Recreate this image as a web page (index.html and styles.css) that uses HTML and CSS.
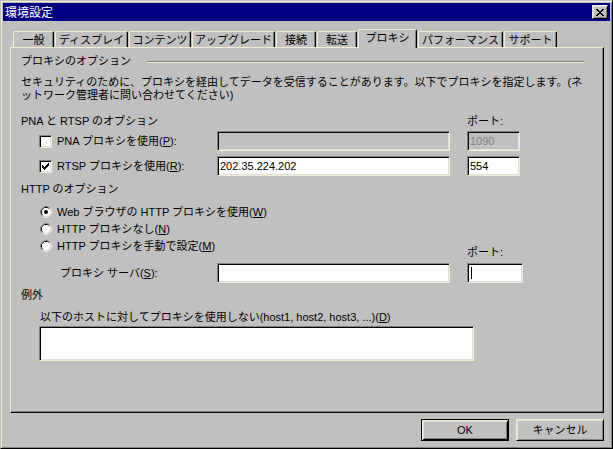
FILE: index.html
```html
<!DOCTYPE html>
<html lang="ja">
<head>
<meta charset="utf-8">
<title>環境設定</title>
<link rel="stylesheet" href="styles.css">
</head>
<body>
<div class="window">
  <div class="titlebar">
    <span class="title">環境設定</span>
    <span class="close-btn"><svg width="8" height="7" viewBox="0 0 8 7" shape-rendering="crispEdges"><path fill="#000" d="M0 0h2v1h-2z M6 0h2v1h-2z M1 1h2v1h-2z M5 1h2v1h-2z M2 2h4v1h-4z M3 3h2v1h-2z M2 4h4v1h-4z M1 5h2v1h-2z M5 5h2v1h-2z M0 6h2v1h-2z M6 6h2v1h-2z"/></svg></span>
  </div>

  <div class="tabs">
    <div class="tab tab-general">一般</div>
    <div class="tab tab-display">ディスプレイ</div>
    <div class="tab tab-contents">コンテンツ</div>
    <div class="tab tab-upgrade">アップグレード</div>
    <div class="tab tab-connect">接続</div>
    <div class="tab tab-transfer">転送</div>
    <div class="tab tab-proxy active">プロキシ</div>
    <div class="tab tab-perf">パフォーマンス</div>
    <div class="tab tab-support">サポート</div>
  </div>

  <div class="panel">
    <div class="group-title"><span>プロキシのオプション</span><span class="etch"></span></div>
    <p class="desc">セキュリティのために、プロキシを経由してデータを受信することがあります。以下でプロキシを指定します。(ネ<br>ットワーク管理者に問い合わせてください)</p>

    <div class="row head-row pna-head">
      <span class="main-col">PNA と RTSP のオプション</span>
      <span>ポート:</span>
    </div>
    <div class="row field-row first-field">
      <div class="check-col">
        <span class="checkbox"></span>
        <span>PNA プロキシを使用(<u>P</u>):</span>
      </div>
      <span class="field disabled"></span>
      <span class="field port disabled">1090</span>
    </div>
    <div class="row field-row second-field">
      <div class="check-col">
        <span class="checkbox"><svg width="7" height="7" viewBox="0 0 7 7" shape-rendering="crispEdges"><path fill="#000" d="M6 0h1v1h-1z M5 1h2v1h-2z M0 2h1v1h-1z M4 2h3v1h-3z M0 3h2v1h-2z M3 3h3v1h-3z M0 4h5v1h-5z M1 5h3v1h-3z M2 6h1v1h-1z"/></svg></span>
        <span>RTSP プロキシを使用(<u>R</u>):</span>
      </div>
      <span class="field">202.35.224.202</span>
      <span class="field port">554</span>
    </div>

    <div class="row head-row http-head">HTTP のオプション</div>
    <div class="radios">
      <div class="radio-row">
        <svg class="radio" width="12" height="12" viewBox="0 0 12 12"><path d="M2.11 9.89 A5.5 5.5 0 0 1 9.89 2.11" stroke="#808080" fill="none"/><path d="M9.89 2.11 A5.5 5.5 0 0 1 2.11 9.89" stroke="#efedd3" fill="none"/><path d="M2.82 9.18 A4.5 4.5 0 0 1 9.18 2.82" stroke="#000" fill="none"/><path d="M9.18 2.82 A4.5 4.5 0 0 1 2.82 9.18" stroke="#dfdfdf" fill="none"/><circle cx="6" cy="6" r="4" fill="#fff"/><circle cx="6" cy="6" r="2" fill="#000"/></svg>
        <span>Web ブラウザの HTTP プロキシを使用(<u>W</u>)</span>
      </div>
      <div class="radio-row">
        <svg class="radio" width="12" height="12" viewBox="0 0 12 12"><path d="M2.11 9.89 A5.5 5.5 0 0 1 9.89 2.11" stroke="#808080" fill="none"/><path d="M9.89 2.11 A5.5 5.5 0 0 1 2.11 9.89" stroke="#efedd3" fill="none"/><path d="M2.82 9.18 A4.5 4.5 0 0 1 9.18 2.82" stroke="#000" fill="none"/><path d="M9.18 2.82 A4.5 4.5 0 0 1 2.82 9.18" stroke="#dfdfdf" fill="none"/><circle cx="6" cy="6" r="4" fill="#fff"/></svg>
        <span>HTTP プロキシなし(<u>N</u>)</span>
      </div>
      <div class="radio-last">
        <div class="radio-row radio-wide">
          <svg class="radio" width="12" height="12" viewBox="0 0 12 12"><path d="M2.11 9.89 A5.5 5.5 0 0 1 9.89 2.11" stroke="#808080" fill="none"/><path d="M9.89 2.11 A5.5 5.5 0 0 1 2.11 9.89" stroke="#efedd3" fill="none"/><path d="M2.82 9.18 A4.5 4.5 0 0 1 9.18 2.82" stroke="#000" fill="none"/><path d="M9.18 2.82 A4.5 4.5 0 0 1 2.82 9.18" stroke="#dfdfdf" fill="none"/><circle cx="6" cy="6" r="4" fill="#fff"/></svg>
          <span>HTTP プロキシを手動で設定(<u>M</u>)</span>
        </div>
        <span class="port-label">ポート:</span>
      </div>
    </div>
    <div class="row field-row server-row">
      <span class="server-col">プロキシ サーバ(<u>S</u>):</span>
      <span class="field"></span>
      <span class="field port wide"><span class="caret"></span></span>
    </div>

    <div class="row head-row except-head">例外</div>
    <div class="except-label">以下のホストに対してプロキシを使用しない(host1, host2, host3, ...)(<u>D</u>)</div>
    <div class="field textarea"></div>
  </div>

  <div class="buttons">
    <button class="btn default">OK</button>
    <button class="btn">キャンセル</button>
  </div>
</div>
</body>
</html>
```

FILE: styles.css
```css
* { box-sizing: border-box; }
html, body { margin: 0; padding: 0; }
body {
  width: 613px;
  height: 449px;
  overflow: hidden;
  background: #c0c0c0;
  font-family: "Liberation Sans", "Noto Sans CJK JP", sans-serif;
  font-size: 11px;
  line-height: 14px;
  color: #000;
}
u { text-decoration: underline; text-underline-offset: 1px; }

.window {
  width: 613px;
  height: 449px;
  display: flex;
  flex-direction: column;
  background: #c0c0c0;
  border: 1px solid;
  border-color: #c0c0c0 #000 #000 #c0c0c0;
  box-shadow: inset 1px 1px #efedd3, inset -1px -1px #808080;
  padding: 2px;
}

/* title bar */
.titlebar {
  flex: none;
  height: 18px;
  background: #000080;
  color: #fff;
  display: flex;
  align-items: center;
  padding: 0 2px;
}
.title { font-size: 12px; line-height: 14px; font-family: "Noto Sans CJK JP", sans-serif; }
.close-btn {
  margin-left: auto;
  width: 16px;
  height: 14px;
  background: #c0c0c0;
  border: 1px solid;
  border-color: #efedd3 #000 #000 #efedd3;
  box-shadow: inset 1px 1px #dfdfdf, inset -1px -1px #808080;
  display: flex;
  align-items: center;
  justify-content: center;
}
.close-btn svg { display: block; }

/* tabs */
.tabs {
  flex: none;
  display: flex;
  align-items: flex-end;
  height: 18px;
  margin: 8px 0 0 10px;
}
.tab {
  height: 16px;
  margin-right: 1px;
  border-left: 1px solid #efedd3;
  border-top: 1px solid #efedd3;
  border-right: 1px solid #000;
  border-radius: 2px 2px 0 0;
  box-shadow: inset -1px 0 #808080;
  display: flex;
  align-items: center;
  justify-content: center;
  white-space: nowrap;
  background: #c0c0c0;
}
.tab.active {
  height: 19px;
  margin-bottom: -1px;
  padding-bottom: 2px;
  position: relative;
  z-index: 1;
}
.tab-general { width: 41px; }
.tab-display { width: 73px; }
.tab-contents { width: 62px; }
.tab-upgrade { width: 83px; }
.tab-connect { width: 40px; }
.tab-transfer { width: 40px; }
.tab-proxy { width: 59px; }
.tab-perf { width: 85px; }
.tab-support { width: 53px; }

/* panel */
.panel {
  flex: none;
  width: 594px;
  height: 366px;
  margin-left: 7px;
  border: 1px solid;
  border-color: #efedd3 #000 #000 #efedd3;
  box-shadow: inset -1px -1px #808080;
  padding: 6px 19px 0 10px;
}
.group-title {
  display: flex;
  height: 14px;
  white-space: nowrap;
}
.etch {
  margin-left: auto;
  margin-top: 7px;
  width: 437px;
  height: 2px;
  border-top: 1px solid #808080;
  border-bottom: 1px solid #efedd3;
}
.desc {
  margin: 8px 0 0;
  line-height: 13px;
  white-space: nowrap;
}

.row {
  display: flex;
  align-items: center;
  white-space: nowrap;
}
.head-row { height: 14px; }
.pna-head { margin-top: 12px; }
.main-col { width: 446px; }

.field-row { height: 20px; }
.first-field { margin-top: 3px; }
.second-field { margin-top: 5px; }

.check-col {
  width: 196px;
  display: flex;
  align-items: center;
  padding-left: 18px;
  gap: 5px;
}
.checkbox {
  width: 13px;
  height: 13px;
  flex: none;
  background: #fff;
  border: 1px solid;
  border-color: #808080 #efedd3 #efedd3 #808080;
  box-shadow: inset 1px 1px #000, inset -1px -1px #dfdfdf;
  display: flex;
  align-items: center;
  justify-content: center;
}
.checkbox svg { display: block; }

.field {
  display: flex;
  align-items: center;
  width: 233px;
  height: 20px;
  background: #fff;
  border: 1px solid;
  border-color: #808080 #efedd3 #efedd3 #808080;
  box-shadow: inset 1px 1px #000, inset -1px -1px #dfdfdf;
  padding: 0 2px;
  font-size: 11px;
}
.field.disabled { background: #c0c0c0; color: #808080; }
.field.port { width: 53px; margin-left: 17px; }
.field.port.wide { width: 56px; }
.caret { width: 1px; height: 12px; background: #000; margin-left: 1px; }

.http-head { margin-top: 6px; }
.radios { margin-top: 7px; }
.radio-row {
  display: flex;
  align-items: center;
  height: 17px;
  padding-left: 19px;
  gap: 5px;
  white-space: nowrap;
}
.radio { display: block; flex: none; }
.radio-last {
  display: flex;
  align-items: flex-start;
  height: 22px;
}
.radio-wide { width: 446px; }
.port-label { align-self: flex-end; height: 14px; white-space: nowrap; }

.server-row { margin-top: 4px; }
.server-col { width: 196px; padding-left: 39px; }

.except-head { margin-top: 5px; }
.except-label {
  margin-top: 8px;
  padding-left: 19px;
  height: 14px;
  white-space: nowrap;
}
.textarea {
  margin: 2px 0 0 18px;
  width: 435px;
  height: 35px;
}

/* buttons */
.buttons {
  flex: none;
  display: flex;
  justify-content: flex-end;
  gap: 7px;
  margin: 6px 6px 0 0;
}
.btn {
  width: 88px;
  height: 22px;
  padding: 0;
  margin: 0;
  font: inherit;
  color: #000;
  background: #c0c0c0;
  border: 1px solid;
  border-color: #efedd3 #000 #000 #efedd3;
  box-shadow: inset 1px 1px #dfdfdf, inset -1px -1px #808080;
}
.btn.default {
  border-color: #000;
  box-shadow: inset 1px 1px #efedd3, inset -1px -1px #000, inset 2px 2px #dfdfdf, inset -2px -2px #808080;
}
```
